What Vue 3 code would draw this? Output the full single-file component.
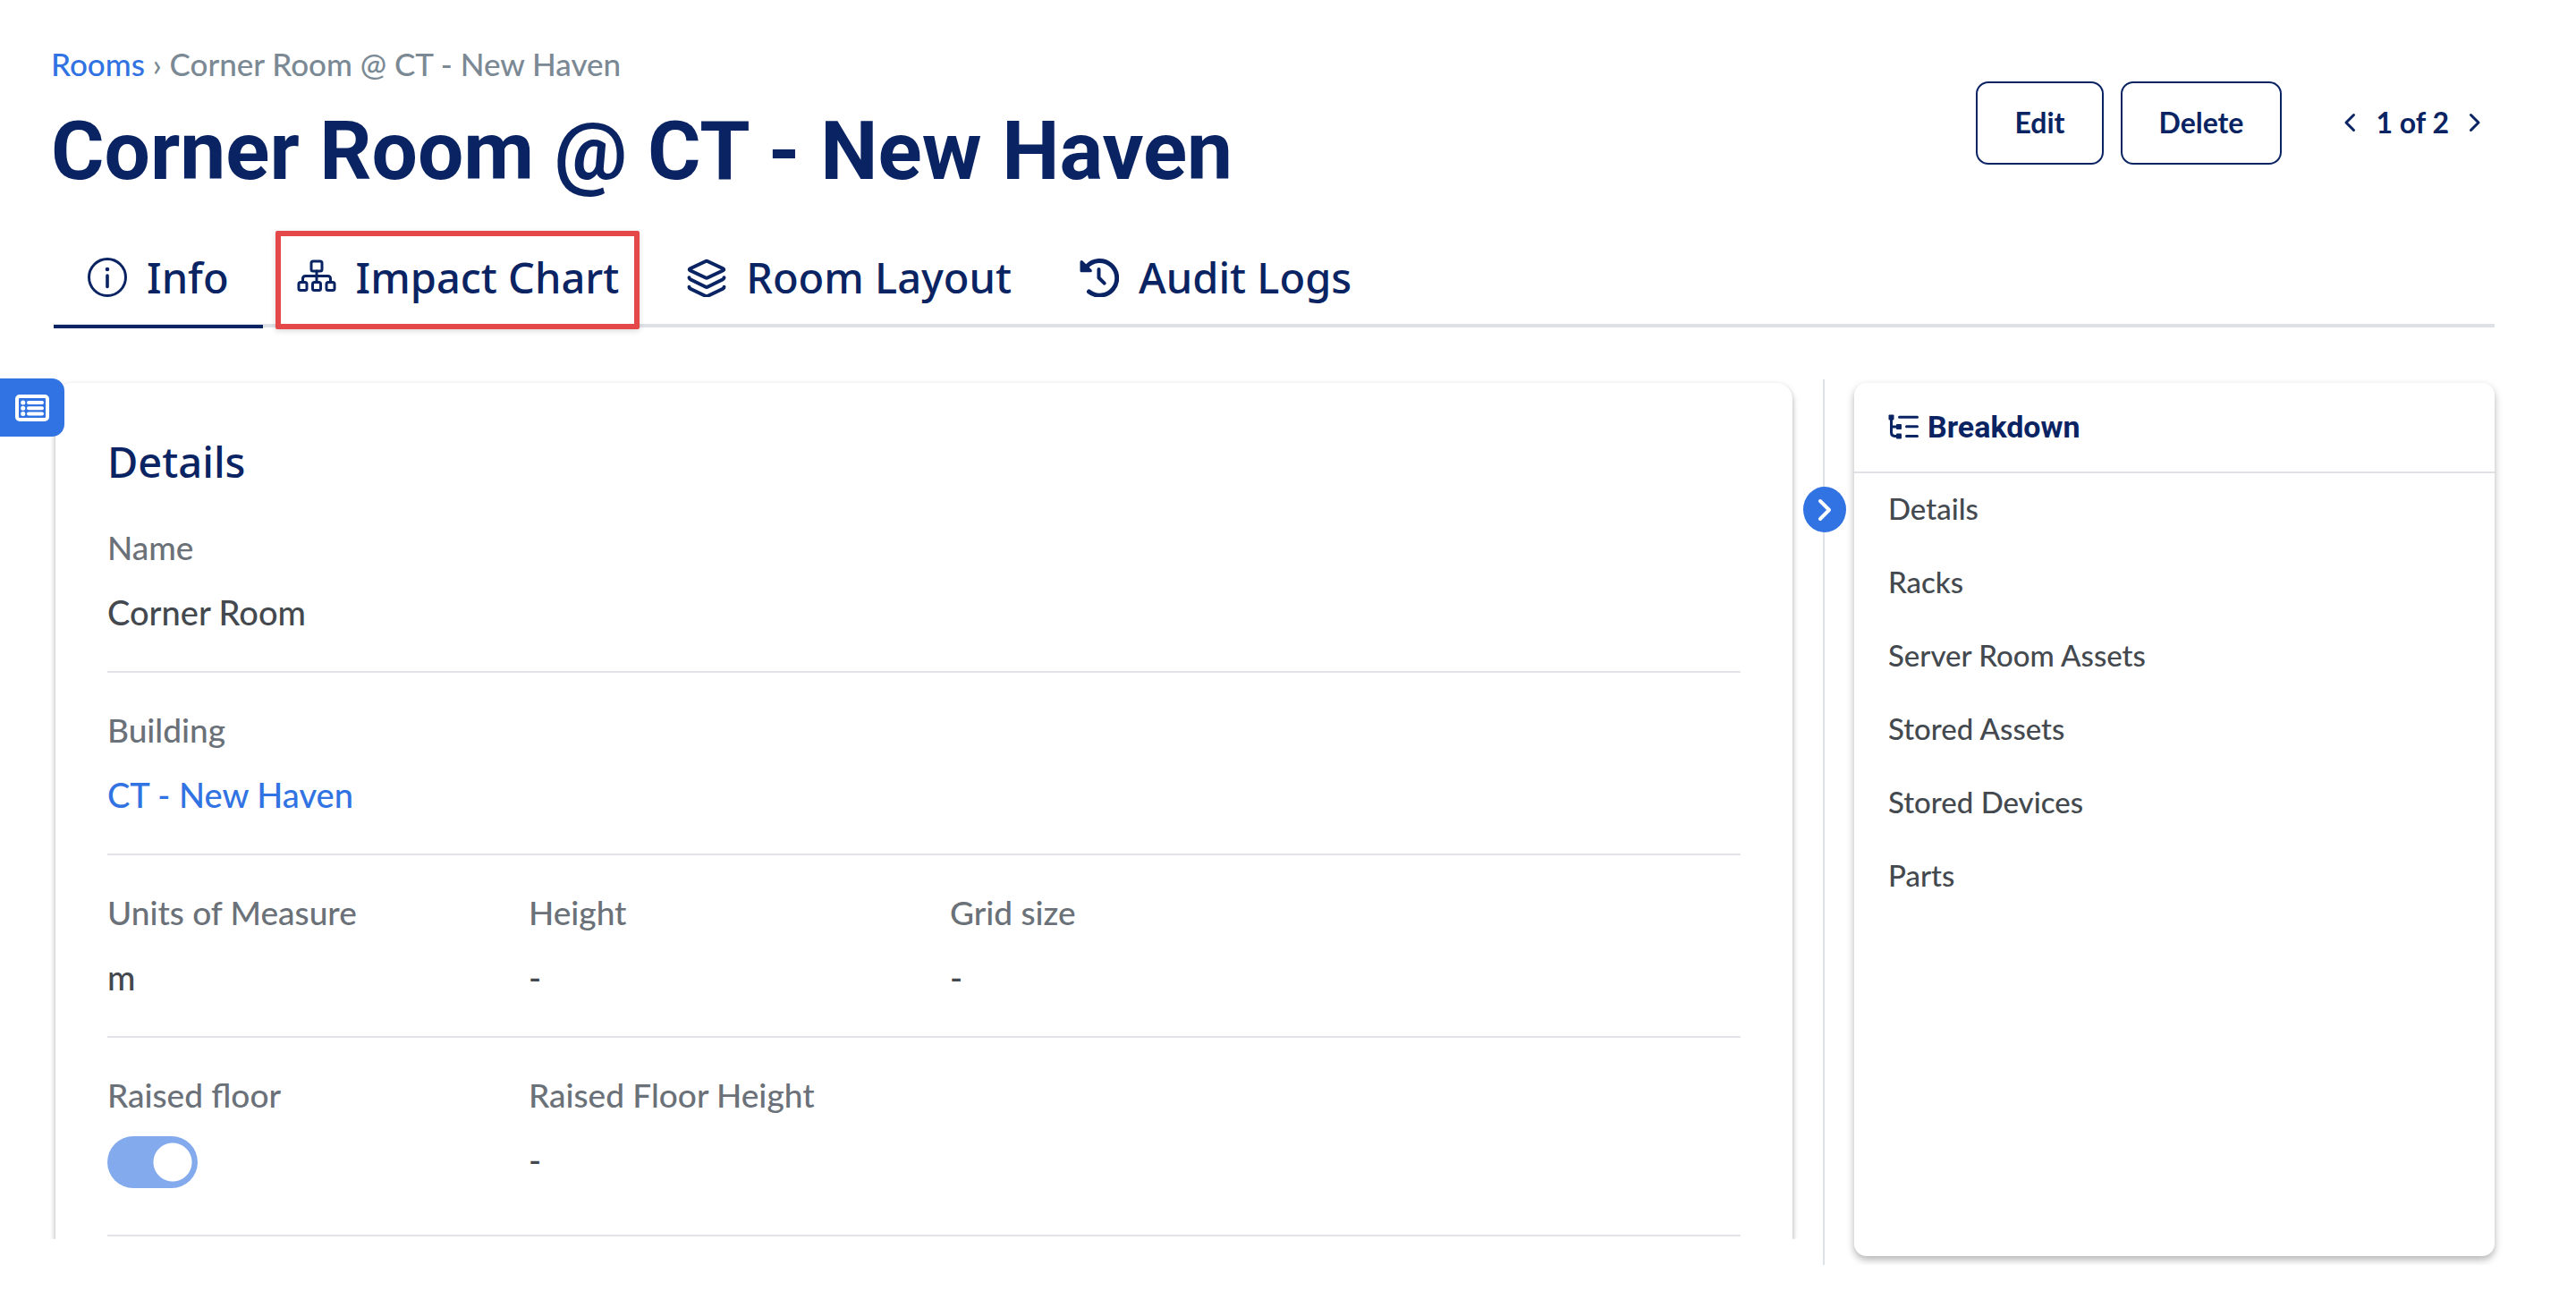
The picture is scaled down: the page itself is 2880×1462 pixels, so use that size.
<script setup>
import { ref } from 'vue'

const tabs = [
  { id: 'info', label: 'Info' },
  { id: 'impact', label: 'Impact Chart' },
  { id: 'layout', label: 'Room Layout' },
  { id: 'logs', label: 'Audit Logs' },
]
const activeTab = ref('info')
const highlightedTab = 'impact'

const rows = [
  [{ label: 'Name', value: 'Corner Room' }],
  [{ label: 'Building', value: 'CT - New Haven', link: true }],
  [
    { label: 'Units of Measure', value: 'm' },
    { label: 'Height', value: '-' },
    { label: 'Grid size', value: '-' },
  ],
  [
    { label: 'Raised floor', toggle: true },
    { label: 'Raised Floor Height', value: '-' },
  ],
]

const sections = ['Details', 'Racks', 'Server Room Assets', 'Stored Assets', 'Stored Devices', 'Parts']
</script>

<template>
  <div class="page">
    <header class="header">
      <div class="heading">
        <nav class="breadcrumb" aria-label="Breadcrumb">
          <a href="#">Rooms</a> › <span>Corner Room @ CT - New Haven</span>
        </nav>
        <h1>Corner Room @ CT - New Haven</h1>
      </div>
      <div class="actions">
        <button type="button" class="btn">Edit</button>
        <button type="button" class="btn">Delete</button>
        <div class="pager">
          <button type="button" aria-label="Previous room">
            <svg width="14" height="22" viewBox="0 0 14 22"><path d="M11.5 2.5 3 11l8.500 8.500" /></svg>
          </button>
          <span>1 of 2</span>
          <button type="button" aria-label="Next room">
            <svg width="14" height="22" viewBox="0 0 14 22"><path d="M2.500 2.500 11 11l-8.500 8.500" /></svg>
          </button>
        </div>
      </div>
    </header>

    <div class="tabs" role="tablist">
      <button
        v-for="tab in tabs"
        :key="tab.id"
        type="button"
        role="tab"
        class="tab"
        :class="{ active: tab.id === activeTab, highlighted: tab.id === highlightedTab }"
        :aria-selected="tab.id === activeTab"
        @click="activeTab = tab.id"
      >
        <svg v-if="tab.id === 'info'" class="tab-icon" viewBox="0 0 44 44">
          <circle cx="22" cy="22" r="20.500" stroke-width="3" />
          <path d="M22 20v12.500" stroke-width="3.600" />
          <circle class="solid" cx="22" cy="13" r="2.300" />
        </svg>
        <svg v-else-if="tab.id === 'impact'" class="tab-icon" viewBox="0 0 44 44" stroke-width="3">
          <rect x="16" y="4" width="12" height="11" rx="2" />
          <path d="M22 15v12M6.500 27v-3.500c0-2 1-3 3-3h25c2 0 3 1 3 3V27" />
          <rect x="2" y="27.500" width="9" height="9" rx="2" />
          <rect x="17.500" y="27.500" width="9" height="9" rx="2" />
          <rect x="33" y="27.500" width="9" height="9" rx="2" />
        </svg>
        <svg v-else-if="tab.id === 'layout'" class="tab-icon" viewBox="0 0 44 44" stroke-width="4">
          <path d="M20.500 4.200 3.500 12.300c-1 .5-1 1.400 0 1.900l17 8.100c1 .5 2 .5 3 0l17-8.100c1-.5 1-1.400 0-1.900l-17-8.100c-1-.5-2-.5-3 0Z" />
          <path d="M2.500 22.300c0 1 .5 1.500 1.300 1.900l16.700 8.300c1 .5 2 .5 3 0l16.700-8.300c.8-.4 1.300-.9 1.300-1.900" />
          <path d="M2.500 32.800c0 1 .5 1.500 1.300 1.900l16.700 8c1 .5 2 .5 3 0l16.700-8c.8-.4 1.300-.9 1.300-1.900" />
        </svg>
        <svg v-else class="tab-icon" viewBox="0 0 44 44">
          <path d="M8 10A19.300 19.300 0 1 1 10.500 38" stroke-width="5" />
          <path class="solid" d="M.5 5C.5 3 2.200 2.300 3.400 3.500L13.200 13.200c1.300 1.300.6 3.100-1 3.100H2.300C1.100 16.300.5 15.600.5 14.500Z" />
          <path d="M21.500 13v9.500l6.200 6.200" stroke-width="4" />
        </svg>
        {{ tab.label }}
      </button>
    </div>

    <div class="body">
      <button type="button" class="drawer" aria-label="Open list">
        <svg width="38" height="30" viewBox="0 0 38 30">
          <rect x="2" y="2" width="34" height="26" rx="3" stroke-width="4" />
          <path d="M15 9h15M15 15.200h15M15 21.400h15" stroke-width="4" />
          <path d="M8.700 9h.1M8.700 15.200h.1M8.700 21.400h.1" stroke-width="5" />
        </svg>
      </button>

      <main class="details-clip">
        <section class="details">
          <h2>Details</h2>
          <dl v-for="(row, i) in rows" :key="i" class="row">
            <div v-for="field in row" :key="field.label" class="field">
              <dt>
                <label v-if="field.toggle" for="raised-floor">{{ field.label }}</label>
                <template v-else>{{ field.label }}</template>
              </dt>
              <dd>
                <input v-if="field.toggle" id="raised-floor" type="checkbox" class="toggle" checked disabled />
                <a v-else-if="field.link" href="#">{{ field.value }}</a>
                <template v-else>{{ field.value }}</template>
              </dd>
            </div>
          </dl>
        </section>
      </main>

      <div class="splitter">
        <button type="button" class="collapse" aria-label="Collapse breakdown">
          <svg width="16" height="26" viewBox="0 0 16 26"><path d="M3 3l10 10L3 23" /></svg>
        </button>
      </div>

      <aside class="breakdown">
        <h3>
          <svg width="34" height="28" viewBox="0 0 34 28">
            <path d="M3.500 3v17.500c0 2.600 1.200 3.900 3.800 3.900H12M3.500 14H12M12.500 3.200h20M20.500 13.800h12M20.500 24.400h12" />
            <rect x="0.500" y="0.500" width="6" height="6" rx="1" />
            <rect x="9" y="11" width="6" height="6" rx="1" />
            <rect x="9" y="21.500" width="6" height="6" rx="1" />
          </svg>
          Breakdown
        </h3>
        <nav aria-label="Sections">
          <a v-for="s in sections" :key="s" href="#">{{ s }}</a>
        </nav>
      </aside>
    </div>
  </div>
</template>

<style>
body {
  margin: 0;
  background: #fff;
}
</style>

<style scoped>
.page {
  --navy: #0a2463;
  --blue: #3173e2;
  --line: #dee2e6;
  color: #43494e;
  font-family: Lato, sans-serif;
  font-weight: 500;
  box-sizing: border-box;
  overflow-x: hidden;
}
*,
*::after {
  box-sizing: border-box;
}
h1, h2, h3, dl, dd {
  margin: 0;
}
a {
  text-decoration: none;
}
button {
  margin: 0;
  padding: 0;
  border: 0;
  background: none;
  color: var(--navy);
  font-family: inherit;
  cursor: pointer;
}
svg {
  display: block;
  flex: none;
  fill: none;
  stroke: currentColor;
  stroke-linecap: round;
  stroke-linejoin: round;
}
.solid {
  fill: currentColor;
  stroke: none;
}

.header {
  display: flex;
  justify-content: space-between;
  align-items: flex-start;
  padding: 47px 91px 0 57px;
}
.breadcrumb {
  color: #7b8994;
  font-size: 35px;
  line-height: 48px;
}
.breadcrumb a {
  color: var(--blue);
}
h1 {
  margin-top: 19px;
  color: var(--navy);
  font: bold 91px/110px Roboto, sans-serif;
}
.actions {
  display: flex;
  align-items: center;
  gap: 19px;
  margin-top: 44px;
  color: var(--navy);
  font-weight: 700;
  font-size: 32px;
}
.btn {
  height: 93px;
  padding: 0 41px 2px;
  border: 2px solid var(--navy);
  border-radius: 14px;
  font-weight: inherit;
  font-size: inherit;
}
.pager {
  display: flex;
  align-items: center;
  gap: 22px;
  margin: 0 15px 2px 50px;
}
.pager svg {
  stroke-width: 3;
}

.tabs {
  display: flex;
  margin: 36px 91px 0 60px;
  border-bottom: 4px solid var(--line);
}
.tab {
  position: relative;
  display: flex;
  align-items: center;
  gap: 22px;
  height: 107px;
  margin-bottom: -5px;
  padding: 0 38px 4px;
  border-bottom: 4px solid transparent;
  font: 500 47px/64px "Noto Sans", sans-serif;
}
.tab.active {
  border-bottom-color: var(--navy);
}
.tab-icon {
  width: 44px;
  height: 44px;
}
.tab.highlighted::after {
  content: "";
  position: absolute;
  inset: -2px 15px -5px 14px;
  border: 6px solid #e54848;
  border-radius: 2px;
  box-shadow: 0 2px 6px rgba(0, 0, 0, 0.15);
}

.body {
  position: relative;
  display: grid;
  grid-template-columns: 1fr 69px 716px;
  align-items: start;
  margin: 58px 91px 0 62px;
}
.drawer {
  position: absolute;
  z-index: 1;
  top: -1px;
  left: -62px;
  display: flex;
  align-items: center;
  justify-content: center;
  width: 72px;
  height: 65px;
  border-radius: 0 14px 14px 0;
  background: var(--blue);
  color: #fff;
}
.details-clip {
  margin-top: 4px;
  clip-path: inset(-8px -8px 0);
}
.details {
  padding: 56px 58px 3px;
  border-radius: 18px 18px 0 0;
  background: #fff;
  box-shadow: 0 3px 6px rgba(0, 0, 0, 0.34);
}
h2 {
  color: var(--navy);
  font: 500 47px/64px "Noto Sans", sans-serif;
}
.row {
  display: grid;
  grid-template-columns: 471px 471px 1fr;
  padding: 28px 0 30px;
  border-bottom: 2px solid #e3e4e9;
  line-height: 72px;
}
dt {
  color: #6b7178;
  font-size: 37px;
}
dd {
  font-size: 38px;
}
dd a {
  color: var(--blue);
}
.toggle {
  display: block;
  appearance: none;
  width: 101px;
  height: 58px;
  margin: 10px 0 22px;
  border-radius: 29px;
  background: radial-gradient(circle at 73px 29px, #fff 21px, #84aaee 22px);
}

.splitter {
  position: relative;
  justify-self: center;
  align-self: stretch;
  width: 2px;
  min-height: 990px;
  background: var(--line);
}
.collapse {
  position: absolute;
  top: 120px;
  left: -22px;
  display: flex;
  align-items: center;
  justify-content: center;
  width: 48px;
  height: 51px;
  border-radius: 50%;
  background: var(--blue);
  color: #fff;
}
.collapse svg {
  stroke-width: 4;
}

.breakdown {
  min-height: 976px;
  margin-top: 4px;
  border-radius: 14px;
  background: #fff;
  box-shadow: 0 4px 8px rgba(0, 0, 0, 0.3);
}
h3 {
  display: flex;
  align-items: center;
  gap: 10px;
  height: 101px;
  padding: 0 38px 2px;
  border-bottom: 2px solid var(--line);
  color: var(--navy);
  font: bold 34px/48px Roboto, sans-serif;
}
h3 svg {
  stroke-width: 3;
}
h3 rect {
  fill: currentColor;
  stroke: none;
}
.breakdown nav {
  margin-top: -2px;
}
.breakdown nav a {
  display: block;
  padding: 0 38px;
  color: inherit;
  font-size: 33px;
  line-height: 82px;
}
</style>
